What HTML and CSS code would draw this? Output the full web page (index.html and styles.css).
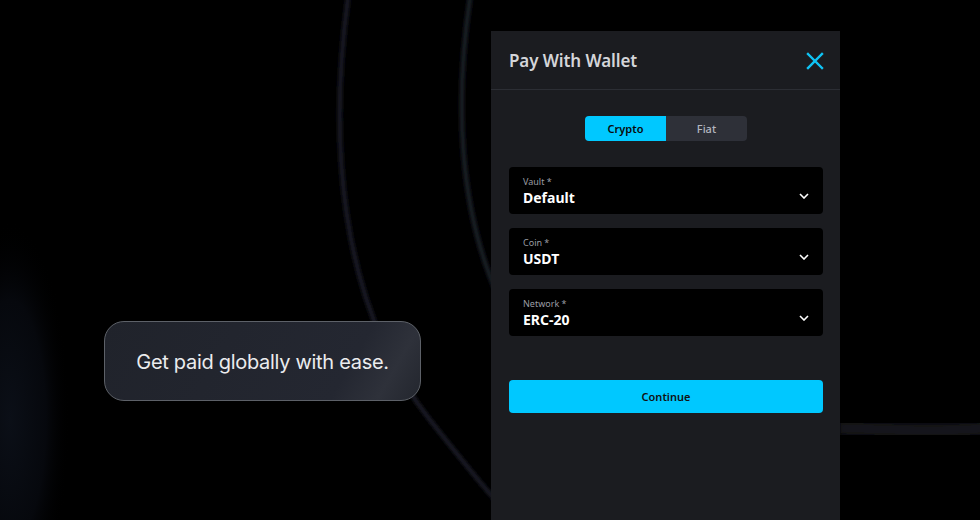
FILE: index.html
```html
<!DOCTYPE html>
<html lang="en">
<head>
  <meta charset="UTF-8" />
  <meta name="viewport" content="width=device-width, initial-scale=1.0"/>
  <title>Pay With Wallet</title>
  <link rel="stylesheet" href="styles.css">
</head>
<body>

  <!-- background rings -->
  <svg class="rings" width="980" height="520" viewBox="0 0 980 520">
    <defs>
      <filter id="soft" x="-20%" y="-20%" width="140%" height="140%"><feGaussianBlur stdDeviation="1.6" /></filter>
      <filter id="band" x="-20%" y="-200%" width="140%" height="500%"><feGaussianBlur stdDeviation="4" /></filter>
      <radialGradient id="haze" cx="50%" cy="50%" r="50%">
        <stop offset="0%" stop-color="#0b0f17" />
        <stop offset="60%" stop-color="#06080d" />
        <stop offset="100%" stop-color="#000" stop-opacity="0" />
      </radialGradient>
    </defs>
    <ellipse cx="10" cy="420" rx="60" ry="200" fill="url(#haze)" />
    <path d="M348 -2 C 330 130, 335 300, 430 420 S 495 495, 500 500" stroke="#151920" stroke-width="5" fill="none" filter="url(#soft)" />
    <path d="M470 -2 C 455 100, 458 210, 500 300" stroke="#181c24" stroke-width="5" fill="none" filter="url(#soft)" />
    <path d="M838 428 C 890 430, 940 432, 990 428" stroke="#15181e" stroke-width="16" fill="none" filter="url(#band)" />
  </svg>

  <div class="stage">
    <div class="promo">Get paid globally with ease.</div>

    <div class="panel">
      <div class="panel-head">
        <h2>Pay With Wallet</h2>
        <svg class="close" width="18" height="18" viewBox="0 0 18 18">
          <path d="M2 2 L16 16 M16 2 L2 16" stroke="#0fc4f5" stroke-width="2.4" stroke-linecap="square" />
        </svg>
      </div>

      <div class="panel-body">
        <div class="tabs">
          <div class="tab active">Crypto</div>
          <div class="tab">Fiat</div>
        </div>

        <div class="field">
          <div>
            <div class="label">Vault *</div>
            <div class="value">Default</div>
          </div>
          <svg class="chev" width="10" height="6" viewBox="0 0 10 6"><path d="M1 1 L5 5 L9 1" stroke="#fff" stroke-width="1.6" fill="none" /></svg>
        </div>

        <div class="field">
          <div>
            <div class="label">Coin *</div>
            <div class="value">USDT</div>
          </div>
          <svg class="chev" width="10" height="6" viewBox="0 0 10 6"><path d="M1 1 L5 5 L9 1" stroke="#fff" stroke-width="1.6" fill="none" /></svg>
        </div>

        <div class="field">
          <div>
            <div class="label">Network *</div>
            <div class="value">ERC-20</div>
          </div>
          <svg class="chev" width="10" height="6" viewBox="0 0 10 6"><path d="M1 1 L5 5 L9 1" stroke="#fff" stroke-width="1.6" fill="none" /></svg>
        </div>

        <button class="continue">Continue</button>
      </div>
    </div>
  </div>

</body>
</html>
```

FILE: styles.css
```css
body {
  margin: 0;
  padding: 0;
  background: #000;
  font-family: "Noto Sans", Arial, sans-serif;
  width: 980px;
  height: 520px;
  overflow: hidden;
  position: relative;
}

.rings {
  position: absolute;
  left: 0;
  top: 0;
}

.stage {
  position: relative;
  display: flex;
  align-items: flex-start;
  gap: 70px;
  padding: 31px 0 0 104px;
}

.promo {
  margin-top: 290px;
  width: 317px;
  height: 80px;
  box-sizing: border-box;
  display: flex;
  align-items: center;
  justify-content: center;
  background: linear-gradient(120deg, #20232b 0%, #242731 75%, #2e313a 88%, #23262e 100%);
  border: 1px solid #5d6168;
  border-radius: 20px;
  color: #ebecee;
  font-family: Inter, "Noto Sans", sans-serif;
  font-size: 20px;
  font-weight: 400;
  letter-spacing: -0.3px;
  padding-top: 1px;
}

.panel {
  width: 349px;
  height: 500px;
  background: #1b1c20;
}

.panel-head {
  height: 58px;
  border-bottom: 1px solid #2c2e34;
  display: flex;
  align-items: center;
  justify-content: space-between;
  padding: 0 16px 0 18px;
}

.panel-head h2 {
  margin: 0;
  font-size: 17px;
  font-weight: 600;
  color: #d4d5d9;
  letter-spacing: -0.1px;
}

.close {
  margin-top: 1px;
}

.panel-body {
  padding: 26px 17px 0 18px;
}

.tabs {
  display: flex;
  justify-content: center;
  margin-bottom: 26px;
}

.tab {
  width: 81px;
  height: 25px;
  display: flex;
  align-items: center;
  justify-content: center;
  background: #2e3038;
  color: #b4b7c0;
  font-size: 11px;
  font-weight: 500;
}

.tab:first-child {
  border-radius: 4px 0 0 4px;
}

.tab:last-child {
  border-radius: 0 4px 4px 0;
}

.tab.active {
  background: #00c8ff;
  color: #0a0a0a;
  font-weight: 600;
}

.field {
  height: 47px;
  box-sizing: border-box;
  background: #000;
  border-radius: 4px;
  margin-bottom: 14px;
  padding: 7px 14px 0 14px;
  display: flex;
  justify-content: space-between;
  align-items: center;
}

.label {
  font-size: 9px;
  color: #9a9ca3;
  line-height: 12px;
}

.value {
  font-size: 14px;
  font-weight: 700;
  color: #fff;
  line-height: 20px;
  margin-bottom: 5px;
}

.chev {
  margin-top: 4px;
}

.continue {
  display: block;
  width: 100%;
  height: 33px;
  margin-top: 44px;
  border: none;
  border-radius: 4px;
  background: #00c8ff;
  color: #111;
  font-family: "Noto Sans", Arial, sans-serif;
  font-size: 11px;
  font-weight: 600;
}
```
